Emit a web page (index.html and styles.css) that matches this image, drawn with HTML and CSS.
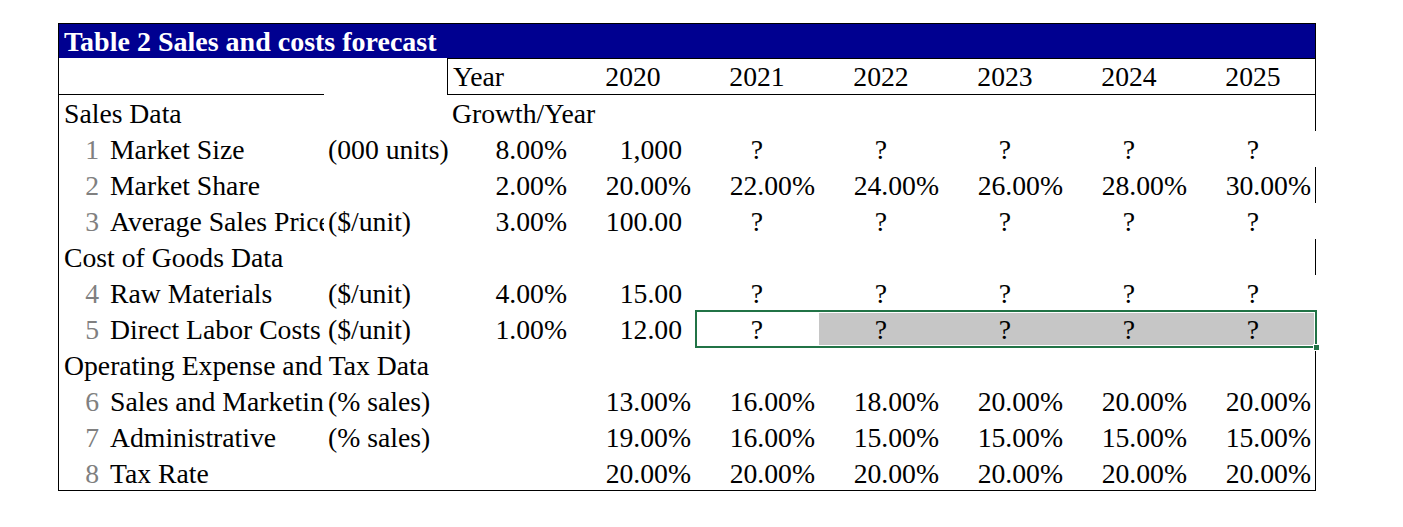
FILE: index.html
```html
<!DOCTYPE html>
<html>
<head>
<meta charset="utf-8">
<title>Table 2 Sales and costs forecast</title>
<link rel="stylesheet" href="styles.css">
</head>
<body>
<div class="sheet">
  <div class="title">Table 2 Sales and costs forecast</div>

  <div class="row head">
    <span class="c hb span2"></span>
    <span class="c"></span>
    <span class="c box first left">Year</span>
    <span class="c box ctr">2020</span>
    <span class="c box ctr">2021</span>
    <span class="c box ctr">2022</span>
    <span class="c box ctr">2023</span>
    <span class="c box ctr">2024</span>
    <span class="c box ctr">2025</span>
  </div>

  <div class="row rb">
    <span class="c sec">Sales Data</span>
    <span class="c left over">Growth/Year</span>
  </div>

  <div class="row">
    <span class="c num">1</span><span class="c lbl">Market Size</span><span class="c unit">(000 units)</span>
    <span class="c r">8.00%</span><span class="c rn">1,000</span>
    <span class="c ctr">?</span><span class="c ctr">?</span><span class="c ctr">?</span><span class="c ctr">?</span><span class="c ctr">?</span>
  </div>

  <div class="row rb">
    <span class="c num">2</span><span class="c lbl">Market Share</span><span class="c unit"></span>
    <span class="c r">2.00%</span><span class="c r">20.00%</span>
    <span class="c r">22.00%</span><span class="c r">24.00%</span><span class="c r">26.00%</span><span class="c r">28.00%</span><span class="c r">30.00%</span>
  </div>

  <div class="row">
    <span class="c num">3</span><span class="c lbl">Average Sales Price</span><span class="c unit">($/unit)</span>
    <span class="c r">3.00%</span><span class="c rn">100.00</span>
    <span class="c ctr">?</span><span class="c ctr">?</span><span class="c ctr">?</span><span class="c ctr">?</span><span class="c ctr">?</span>
  </div>

  <div class="row rb">
    <span class="c sec">Cost of Goods Data</span>
  </div>

  <div class="row">
    <span class="c num">4</span><span class="c lbl">Raw Materials</span><span class="c unit">($/unit)</span>
    <span class="c r">4.00%</span><span class="c rn">15.00</span>
    <span class="c ctr">?</span><span class="c ctr">?</span><span class="c ctr">?</span><span class="c ctr">?</span><span class="c ctr">?</span>
  </div>

  <div class="row selrow">
    <span class="c num">5</span><span class="c lbl">Direct Labor Costs</span><span class="c unit">($/unit)</span>
    <span class="c r">1.00%</span><span class="c rn">12.00</span>
    <span class="c ctr">?</span><span class="c ctr hl">?</span><span class="c ctr hl">?</span><span class="c ctr hl">?</span><span class="c ctr hl">?</span>
    <div class="sel"><div class="handle"></div></div>
  </div>

  <div class="row rb">
    <span class="c sec">Operating Expense and Tax Data</span>
  </div>

  <div class="row rb">
    <span class="c num">6</span><span class="c lbl">Sales and Marketing</span><span class="c unit">(% sales)</span>
    <span class="c r"></span><span class="c r">13.00%</span>
    <span class="c r">16.00%</span><span class="c r">18.00%</span><span class="c r">20.00%</span><span class="c r">20.00%</span><span class="c r">20.00%</span>
  </div>

  <div class="row rb">
    <span class="c num">7</span><span class="c lbl">Administrative</span><span class="c unit">(% sales)</span>
    <span class="c r"></span><span class="c r">19.00%</span>
    <span class="c r">16.00%</span><span class="c r">15.00%</span><span class="c r">15.00%</span><span class="c r">15.00%</span><span class="c r">15.00%</span>
  </div>

  <div class="row rb last">
    <span class="c num">8</span><span class="c lbl">Tax Rate</span><span class="c unit"></span>
    <span class="c r"></span><span class="c r">20.00%</span>
    <span class="c r">20.00%</span><span class="c r">20.00%</span><span class="c r">20.00%</span><span class="c r">20.00%</span><span class="c r">20.00%</span>
  </div>
</div>
</body>
</html>
```

FILE: styles.css
```css
html, body {
  margin: 0;
  padding: 0;
  background: #ffffff;
}

body {
  font-family: "Liberation Serif", "Times New Roman", serif;
  font-size: 27.7px;
  color: #000;
}

.sheet {
  display: inline-block;
  margin: 23px 0 0 58px;
  border-top: 1px solid #000;
  border-left: 1px solid #000;
  border-bottom: 1px solid #000;
}

.title {
  height: 34px;
  box-sizing: border-box;
  padding: 2px 0 0 5px;
  line-height: 32px;
  font-size: 28px;
  background: #000090;
  color: #fff;
  font-weight: bold;
  border-right: 1px solid #000;
  white-space: nowrap;
}

.row {
  display: grid;
  grid-template-columns: 46px 219px 123px 124px repeat(6, 124px);
  height: 36px;
  line-height: 35px;
  border-right: 1px solid transparent;
  white-space: nowrap;
}

.row.rb {
  border-right-color: #000;
}

.row.last {
  height: 35px;
}

.row.head {
  height: 37px;
  line-height: 34px;
  border-right-color: #000;
}

.c {
  display: block;
  box-sizing: border-box;
  overflow: hidden;
  padding-top: 1px;
}

.span2 {
  grid-column: 1 / span 2;
}

.hb {
  border-bottom: 1px solid #000;
}

.box {
  border-top: 1px solid #000;
  border-bottom: 1px solid #000;
}

.box.first {
  border-left: 1px solid #000;
}

.left {
  padding-left: 5px;
}

.over {
  overflow: visible;
}

.ctr {
  text-align: center;
}

.sec {
  grid-column: 1 / span 3;
  padding-left: 5px;
  overflow: visible;
}

.num {
  text-align: right;
  padding-right: 6px;
  color: #808080;
}

.lbl {
  padding-left: 5px;
}

.unit {
  padding-left: 4px;
  overflow: visible;
}

.r {
  text-align: right;
  padding-right: 4px;
}

.rn {
  text-align: right;
  padding-right: 13px;
}

.hl {
  background: #c6c6c6;
}

.selrow {
  position: relative;
}

.sel {
  position: absolute;
  left: 636px;
  top: -1px;
  width: 622px;
  height: 38px;
  box-sizing: border-box;
  border: 2px solid #217346;
  box-shadow: inset 0 0 0 1px #fff;
}

.handle {
  position: absolute;
  right: -5px;
  bottom: -5px;
  width: 5px;
  height: 5px;
  background: #217346;
  border: 1px solid #fff;
}
```
